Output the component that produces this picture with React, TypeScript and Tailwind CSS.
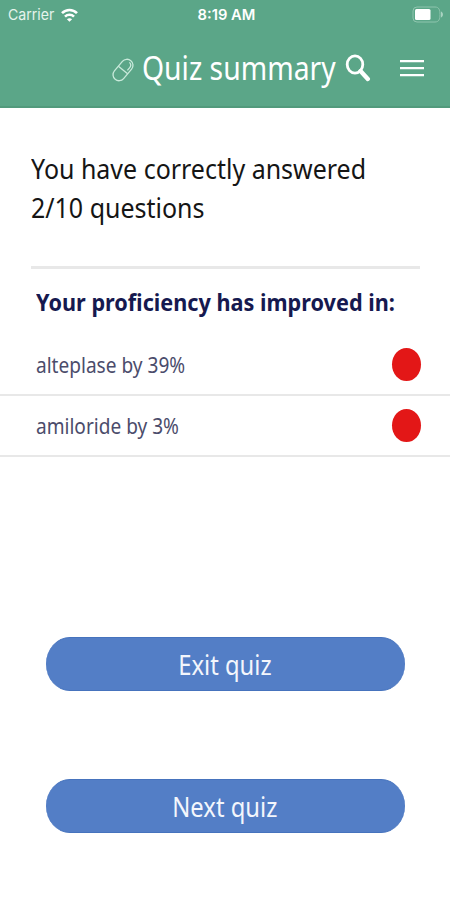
type Progress = { name: string; gain: number };

const progress: Progress[] = [
  { name: 'alteplase', gain: 39 },
  { name: 'amiloride', gain: 3 },
];

function StatusBar() {
  return (
    <div className="flex h-[29px] items-center justify-between pl-[8px] pr-[6px] font-['Inter','Roboto',sans-serif]">
      <div className="flex w-[130px] items-center gap-[7px]">
        <span className="w-[46px] origin-left scale-x-[0.94] whitespace-nowrap text-[15px] leading-[29px] text-[#e6f4ed]">Carrier</span>
        <svg className="h-[14px] w-[17px]" viewBox="0 0 17 14" fill="none" stroke="currentColor" strokeWidth="2.6">
          <path d="M1 5.2C5.2 0.9 11.8 0.9 16 5.2" />
          <path d="M4 8.6C6.5 6.1 10.5 6.1 13 8.6" />
          <path d="M8.5 13.8L5.9 11.2C7.4 9.8 9.6 9.8 11.1 11.2Z" fill="currentColor" stroke="none" />
        </svg>
      </div>
      <span className="origin-center scale-x-[0.98] whitespace-nowrap text-[15px] font-semibold leading-[29px]">8:19 AM</span>
      <div className="flex w-[130px] justify-end">
        <svg className="h-[17px] w-[32px]" viewBox="0 0 32 17" fill="none">
          <path d="M5 1H23C27 1 28 4 28 8.5S27 16 23 16H5Q1 16 1 12V5Q1 1 5 1Z" stroke="#8fc5ae" strokeWidth="1" />
          <rect x="3" y="3" width="15.5" height="11" rx="1.5" fill="#fff" />
          <path d="M29 5.5C31.6 6.3 31.6 10.7 29 11.5Z" fill="#a9d3c1" />
        </svg>
      </div>
    </div>
  );
}

function Header() {
  return (
    <header className="h-[108px] border-b-2 border-[#529a7c] bg-[#5ba688] text-white">
      <StatusBar />
      <div className="flex h-[78px] items-center pl-[112px]">
        <svg className="mt-[3px] h-[26px] w-[22px]" viewBox="0 0 22 26" fill="none" stroke="#c9eadb" strokeWidth="1.3">
          <g transform="rotate(40 11 13)">
            <rect x="5" y="0.8" width="12" height="24.4" rx="6" />
            <path d="M5 13H17" />
            <path d="M14.6 10.5V6.8C14.6 4.8 13.2 3.2 11 3" />
          </g>
        </svg>
        <h1 className="ml-[8px] w-[196px] origin-left scale-x-[0.885] whitespace-nowrap text-[32px] leading-[44px]">Quiz summary</h1>
        <svg className="ml-[7px] h-[28px] w-[26px]" viewBox="0 0 26 28" fill="none" stroke="currentColor">
          <ellipse cx="10" cy="10.5" rx="7.8" ry="8.6" strokeWidth="2.8" />
          <path d="M15.5 17L22.8 24.9" strokeWidth="4.4" strokeLinecap="round" />
        </svg>
        <svg className="ml-[29px] h-[18px] w-[24px]" viewBox="0 0 24 18" stroke="currentColor" strokeWidth="2.2">
          <path d="M0 2.2H24M0 9.2H24M0 16.2H24" />
        </svg>
      </div>
    </header>
  );
}

function QuizButton({ label }: { label: string }) {
  return (
    <button className="flex h-[54px] w-full items-center justify-center rounded-[24px/27px] border-y border-[#4673bd] bg-[#537ec6] text-[28px] text-[#f3f6fc]">
      <span className="relative right-px scale-x-[0.85] whitespace-nowrap leading-[54px]">{label}</span>
    </button>
  );
}

export default function App() {
  return (
    <div className="h-[900px] w-[450px] overflow-hidden bg-white font-['Noto_Sans',sans-serif]">
      <Header />
      <main>
        <section className="ml-[31px] mr-[30px] h-[161px] border-b-[3px] border-[#e8e8e8] pt-[41px]">
          <p className="origin-left scale-x-[0.892] whitespace-nowrap text-[28px] leading-[39px] text-[#151515]">
            You have correctly answered
            <br />
            2/10 questions
          </p>
        </section>
        <h2 className="ml-[36px] mt-[15px] w-[400px] origin-left scale-x-[0.902] whitespace-nowrap text-[24px] font-bold leading-[36px] text-[#16194f]">
          Your proficiency has improved in:
        </h2>
        <ul className="mt-[15px]">
          {progress.map((item) => (
            <li key={item.name} className="flex h-[61px] items-center justify-between border-b-2 border-[#e8e8e8] pl-[36px] pr-[29px]">
              <span className="mt-[2px] origin-left scale-x-[0.908] whitespace-nowrap text-[21px] text-[#4b4c6b]">
                {item.name} by {item.gain}%
              </span>
              <span className="h-[33px] w-[29px] rounded-[50%] bg-[#e31717]" />
            </li>
          ))}
        </ul>
        <div className="mt-[180px] flex flex-col gap-[88px] pl-[46px] pr-[45px]">
          <QuizButton label="Exit quiz" />
          <QuizButton label="Next quiz" />
        </div>
      </main>
    </div>
  );
}
